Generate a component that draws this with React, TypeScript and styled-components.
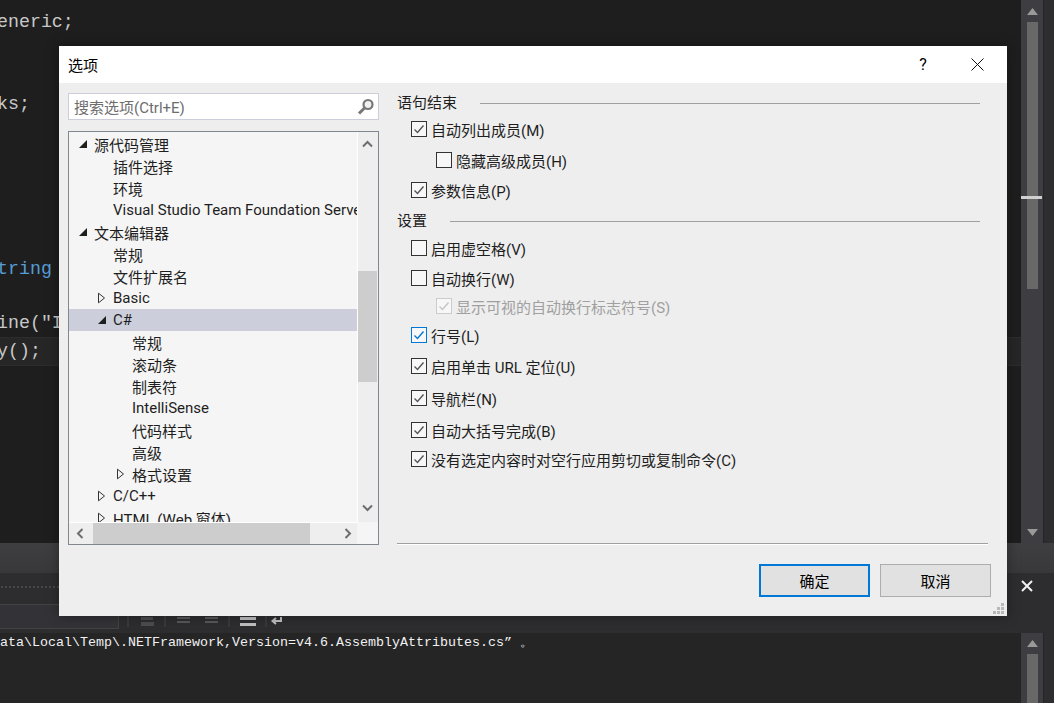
import React from 'react';
import styled, { createGlobalStyle } from 'styled-components';

const GlobalStyle = createGlobalStyle`
  html, body {
    margin: 0;
    padding: 0;
    background: #1e1e1e;
    overflow: hidden;
  }
  * {
    box-sizing: border-box;
  }
`;

const Ide = styled.div`
  position: relative;
  width: 1054px;
  height: 703px;
  display: flex;
  flex-direction: column;
  overflow: hidden;
  background: #2d2d30;
`;

const TopRow = styled.div`
  height: 543px;
  display: flex;
`;

const Editor = styled.div`
  flex: 1;
  background: #1e1e1e;
  padding-top: 9px;
  overflow: hidden;
`;

const CodeLine = styled.div<{ $current?: boolean }>`
  height: 27.4px;
  line-height: 27.4px;
  margin-left: -3px;
  font-family: "Liberation Mono", "DejaVu Sans Mono", monospace;
  font-size: 18.3px;
  color: #c8c8c8;
  white-space: pre;
  ${p => p.$current && `
    background: #262626;
    box-shadow: 0 0 0 1px #2c2c2c;
  `}
`;

const Keyword = styled.span`
  color: #569cd6;
`;

const ScrollColumn = styled.div`
  width: 22px;
  background: #3e3e42;
  position: relative;
  display: flex;
  flex-direction: column;
  align-items: center;
`;

const ScrollArrow = styled.svg<{ $top: number }>`
  width: 11px;
  height: 7px;
  margin-top: ${p => p.$top}px;
  flex: none;
`;

const DarkThumb = styled.div<{ $height: number; $top: number }>`
  width: 11px;
  height: ${p => p.$height}px;
  margin-top: ${p => p.$top}px;
  background: #686868;
  flex: none;
`;

const CaretMark = styled.div`
  position: absolute;
  left: 0;
  top: 196px;
  width: 21px;
  height: 3px;
  background: #d0d0d0;
`;

const SideStrip = styled.div`
  width: 11px;
  background: #2d2d30;
  border-left: 1px solid #252526;
`;

const Band = styled.div`
  height: 30px;
  background: linear-gradient(#3f3f42, #38383b);
`;

const PanelHeader = styled.div`
  height: 31px;
  background: #2d2d30;
  display: flex;
  align-items: flex-start;
  justify-content: flex-end;
  padding: 7px 21px 0 0;
  position: relative;
`;

const Dots = styled.div`
  position: absolute;
  left: 0;
  top: 12px;
  width: 59px;
  height: 4px;
  background-image: radial-gradient(#46464a 1px, transparent 1px);
  background-size: 4px 4px;
`;

const Toolbar = styled.div`
  height: 29px;
  background: #2d2d30;
  position: relative;
`;

const ComboBox = styled.div`
  width: 119px;
  height: 25px;
  border: 1px solid #434346;
  border-left: none;
  background: #333337;
`;

const ToolIcons = styled.svg`
  position: absolute;
  left: 120px;
  top: 0;
  width: 180px;
  height: 29px;
`;

const BottomRow = styled.div`
  height: 70px;
  display: flex;
`;

const Output = styled.div`
  flex: 1;
  background: #252526;
  padding-top: 2px;
  margin: 0;
`;

const OutputLine = styled.div`
  font-family: "Liberation Mono", monospace;
  font-size: 13.33px;
  line-height: 16px;
  color: #f1f1f1;
  white-space: pre;
`;

const Dialog = styled.div`
  position: absolute;
  left: 59px;
  top: 46px;
  width: 948px;
  height: 570px;
  display: flex;
  flex-direction: column;
  background: #eeeeee;
  box-shadow: 0 0 12px rgba(0, 0, 0, 0.35);
  font-family: Roboto, "Noto Sans CJK SC", sans-serif;
  font-size: 15px;
  color: #1e1e1e;
`;

const TitleBar = styled.div`
  height: 37px;
  flex: none;
  background: #ffffff;
  display: flex;
  align-items: center;
  padding-left: 9px;
  color: #000;
`;

const TitleText = styled.div`
  flex: 1;
`;

const HelpGlyph = styled.div`
  width: 20px;
  margin-right: 38px;
  text-align: center;
  font-size: 16px;
`;

const CloseGlyph = styled.svg`
  width: 13px;
  height: 13px;
  margin-right: 23px;
`;

const DialogBody = styled.div`
  flex: 1;
  display: flex;
  gap: 18px;
  padding: 10px 16px 19px 9px;
  min-height: 0;
`;

const LeftPane = styled.div`
  width: 311px;
  display: flex;
  flex-direction: column;
  gap: 11px;
`;

const SearchBox = styled.div`
  height: 27px;
  flex: none;
  background: #fff;
  border: 1px solid #cccedb;
  display: flex;
  align-items: center;
  justify-content: space-between;
  padding: 0 3px 0 5px;
  color: #6d6d6d;
`;

const Tree = styled.div`
  height: 414px;
  flex: none;
  border: 1px solid #82878f;
  background: #f5f5f5;
  display: grid;
  grid-template-columns: 288px 21px;
  grid-template-rows: 390px 22px;
`;

const TreeViewport = styled.div`
  overflow: hidden;
  padding-top: 1px;
`;

const TreeRow = styled.div<{ $level: number; $selected?: boolean }>`
  height: 22px;
  display: flex;
  align-items: center;
  white-space: nowrap;
  padding-left: ${p => 9 + p.$level * 19}px;
  background: ${p => (p.$selected ? '#cccedb' : 'transparent')};
`;

const ArrowSlot = styled.div`
  width: 16px;
  flex: none;
  display: flex;
  align-items: center;
`;

const VScroll = styled.div`
  background: #eeeeee;
  border-left: 1px solid #ffffff;
  display: flex;
  flex-direction: column;
  align-items: center;
  padding-right: 1px;
`;

const LightVThumb = styled.div`
  width: 19px;
  height: 111px;
  margin-top: 121px;
  background: #cdcdcd;
  flex: none;
`;

const HScroll = styled.div`
  background: #eeeeee;
  border-top: 1px solid #ffffff;
  display: flex;
  align-items: center;
  padding-left: 6px;
`;

const LightHThumb = styled.div`
  width: 217px;
  height: 21px;
  margin-left: 7px;
  background: #cdcdcd;
  flex: none;
`;

const Corner = styled.div`
  background: #f5f5f5;
`;

const ChevronIcon = styled.svg<{ $top?: number; $left?: number }>`
  width: 11px;
  height: 11px;
  flex: none;
  margin-top: ${p => p.$top ?? 0}px;
  margin-left: ${p => p.$left ?? 0}px;
`;

const RightPane = styled.div`
  flex: 1;
  display: flex;
  flex-direction: column;
`;

const Options = styled.div`
  height: 450px;
  flex: none;
`;

const GroupHeading = styled.div<{ $top?: number }>`
  height: 20px;
  line-height: 20px;
  margin-top: ${p => p.$top ?? 0}px;
  margin-right: 11px;
  display: flex;
  align-items: center;
  gap: 23px;
  &::after {
    content: '';
    flex: 1;
    height: 1px;
    background: #a0a0a0;
  }
`;

const OptionRow = styled.div<{ $top: number; $nested?: boolean; $disabled?: boolean }>`
  height: 20px;
  margin-top: ${p => p.$top}px;
  margin-left: ${p => (p.$nested ? 39 : 14)}px;
  display: flex;
  align-items: center;
  gap: 4px;
  color: ${p => (p.$disabled ? '#a0a0a0' : '#1e1e1e')};
`;

const CheckFrame = styled.div<{ $tone: 'normal' | 'focus' | 'disabled' }>`
  width: 16px;
  height: 16px;
  flex: none;
  background: #f7f7f7;
  border: 1px solid
    ${p => (p.$tone === 'focus' ? '#0078d7' : p.$tone === 'disabled' ? '#cccccc' : '#333333')};
  display: flex;
  align-items: center;
  justify-content: center;
`;

const FooterRule = styled.div`
  height: 1px;
  width: 591px;
  background: #a0a0a0;
  box-shadow: 0 1px 0 #ffffff;
  flex: none;
`;

const ButtonRow = styled.div`
  margin-top: 20px;
  display: flex;
  justify-content: flex-end;
  gap: 10px;
`;

const DialogButton = styled.button<{ $primary?: boolean }>`
  width: 111px;
  height: 33px;
  padding: 0;
  background: #e1e1e1;
  border: ${p => (p.$primary ? '2px solid #0078d7' : '1px solid #adadad')};
  font: inherit;
  color: #000;
`;

const Grip = styled.svg`
  position: absolute;
  right: 3px;
  bottom: 2px;
  width: 11px;
  height: 11px;
`;

const Filled = () => (
  <svg width="10" height="10" viewBox="0 0 10 10">
    <path d="M9 1V9H1Z" fill="#1e1e1e" />
  </svg>
);

const Hollow = () => (
  <svg width="9" height="12" viewBox="0 0 9 12">
    <path d="M1.5 1.2V10.8L7.5 6Z" fill="#f5f5f5" stroke="#333" />
  </svg>
);

type Dir = 'up' | 'down' | 'left' | 'right';

const chevronPaths: Record<Dir, string> = {
  up: 'M1 7.5L5.5 3L10 7.5',
  down: 'M1 3.5L5.5 8L10 3.5',
  left: 'M7.5 1L3 5.5L7.5 10',
  right: 'M3.5 1L8 5.5L3.5 10',
};

const Chevron = ({ dir, top, left }: { dir: Dir; top?: number; left?: number }) => (
  <ChevronIcon viewBox="0 0 11 11" $top={top} $left={left}>
    <path d={chevronPaths[dir]} fill="none" stroke="#6d6d6d" strokeWidth="2" />
  </ChevronIcon>
);

const Tick = ({ color }: { color: string }) => (
  <svg width="12" height="12" viewBox="0 0 12 12">
    <path d="M1.5 6.5L4.5 9.5L10.5 2.5" fill="none" stroke={color} strokeWidth="1.4" />
  </svg>
);

interface TreeItem {
  label: string;
  level: number;
  arrow?: 'open' | 'closed';
  selected?: boolean;
}

const treeItems: TreeItem[] = [
  { label: '源代码管理', level: 0, arrow: 'open' },
  { label: '插件选择', level: 1 },
  { label: '环境', level: 1 },
  { label: 'Visual Studio Team Foundation Server', level: 1 },
  { label: '文本编辑器', level: 0, arrow: 'open' },
  { label: '常规', level: 1 },
  { label: '文件扩展名', level: 1 },
  { label: 'Basic', level: 1, arrow: 'closed' },
  { label: 'C#', level: 1, arrow: 'open', selected: true },
  { label: '常规', level: 2 },
  { label: '滚动条', level: 2 },
  { label: '制表符', level: 2 },
  { label: 'IntelliSense', level: 2 },
  { label: '代码样式', level: 2 },
  { label: '高级', level: 2 },
  { label: '格式设置', level: 2, arrow: 'closed' },
  { label: 'C/C++', level: 1, arrow: 'closed' },
  { label: 'HTML (Web 窗体)', level: 1, arrow: 'closed' },
];

interface OptionItem {
  kind: 'option';
  label: string;
  top: number;
  checked?: boolean;
  nested?: boolean;
  tone?: 'normal' | 'focus' | 'disabled';
}

interface HeadingItem {
  kind: 'heading';
  label: string;
  top: number;
}

const optionItems: (OptionItem | HeadingItem)[] = [
  { kind: 'heading', label: '语句结束', top: 0 },
  { kind: 'option', label: '自动列出成员(M)', top: 6, checked: true },
  { kind: 'option', label: '隐藏高级成员(H)', top: 11, nested: true },
  { kind: 'option', label: '参数信息(P)', top: 10, checked: true },
  { kind: 'heading', label: '设置', top: 11 },
  { kind: 'option', label: '启用虚空格(V)', top: 7 },
  { kind: 'option', label: '自动换行(W)', top: 10 },
  { kind: 'option', label: '显示可视的自动换行标志符号(S)', top: 8, nested: true, checked: true, tone: 'disabled' },
  { kind: 'option', label: '行号(L)', top: 9, checked: true, tone: 'focus' },
  { kind: 'option', label: '启用单击 URL 定位(U)', top: 11, checked: true },
  { kind: 'option', label: '导航栏(N)', top: 12, checked: true },
  { kind: 'option', label: '自动大括号完成(B)', top: 12, checked: true },
  { kind: 'option', label: '没有选定内容时对空行应用剪切或复制命令(C)', top: 9, checked: true },
];

const tickColors = { normal: '#555555', focus: '#0078d7', disabled: '#c4c4c4' };

export default function App() {
  return (
    <Ide>
      <GlobalStyle />
      <TopRow>
        <Editor>
          <CodeLine>eneric;</CodeLine>
          <CodeLine> </CodeLine>
          <CodeLine> </CodeLine>
          <CodeLine>ks;</CodeLine>
          <CodeLine> </CodeLine>
          <CodeLine> </CodeLine>
          <CodeLine> </CodeLine>
          <CodeLine> </CodeLine>
          <CodeLine> </CodeLine>
          <CodeLine><Keyword>tring</Keyword></CodeLine>
          <CodeLine> </CodeLine>
          <CodeLine>ine("I</CodeLine>
          <CodeLine $current>y();</CodeLine>
        </Editor>
        <ScrollColumn>
          <ScrollArrow $top={8} viewBox="0 0 11 7">
            <path d="M5.5 0L11 7H0Z" fill="#999999" />
          </ScrollArrow>
          <DarkThumb $top={7} $height={267} />
          <CaretMark />
          <ScrollArrow $top={240} viewBox="0 0 11 7">
            <path d="M0 0H11L5.5 7Z" fill="#999999" />
          </ScrollArrow>
        </ScrollColumn>
        <SideStrip />
      </TopRow>
      <Band />
      <PanelHeader>
        <Dots />
        <svg width="12" height="12" viewBox="0 0 12 12">
          <path d="M1 1L11 11M11 1L1 11" stroke="#f1f1f1" strokeWidth="2" />
        </svg>
      </PanelHeader>
      <Toolbar>
        <ComboBox />
        <ToolIcons viewBox="0 0 180 29">
          <path d="M8 12V23M45 12V23M109 12V23M146 12V23" stroke="#46464a" />
          <rect x="21" y="13" width="12" height="3" fill="#4c4c4e" />
          <rect x="21" y="18" width="13" height="4" fill="#4c4c4e" />
          <rect x="57" y="13" width="13" height="2" fill="#58585a" />
          <rect x="57" y="17" width="13" height="2" fill="#58585a" />
          <rect x="85" y="13" width="13" height="2" fill="#58585a" />
          <rect x="85" y="17" width="13" height="2" fill="#58585a" />
          <rect x="120" y="13" width="16" height="3" fill="#c0c0c0" />
          <rect x="120" y="19" width="16" height="3" fill="#c0c0c0" />
          <path d="M161 13V17H153M156 14L152.500 17L156 20" fill="none" stroke="#c0c0c0" strokeWidth="2" />
        </ToolIcons>
      </Toolbar>
      <BottomRow>
        <Output>
          <OutputLine>ata\Local\Temp\.NETFramework,Version=v4.6.AssemblyAttributes.cs” 。</OutputLine>
        </Output>
        <ScrollColumn>
          <ScrollArrow $top={7} viewBox="0 0 11 7">
            <path d="M5.5 0L11 7H0Z" fill="#999999" />
          </ScrollArrow>
          <DarkThumb $top={7} $height={60} />
        </ScrollColumn>
        <SideStrip />
      </BottomRow>

      <Dialog>
        <TitleBar>
          <TitleText>选项</TitleText>
          <HelpGlyph>?</HelpGlyph>
          <CloseGlyph viewBox="0 0 13 13">
            <path d="M0.5 0.5L12.500 12.500M12.500 0.5L0.5 12.500" stroke="#111" strokeWidth="1" />
          </CloseGlyph>
        </TitleBar>
        <DialogBody>
          <LeftPane>
            <SearchBox>
              <span>搜索选项(Ctrl+E)</span>
              <svg width="18" height="18" viewBox="0 0 18 18">
                <circle cx="11" cy="6.500" r="4.500" fill="#f0f0f0" stroke="#777" strokeWidth="2.200" />
                <path d="M7.500 10L2 15.500" stroke="#777" strokeWidth="3" />
              </svg>
            </SearchBox>
            <Tree>
              <TreeViewport>
                {treeItems.map((item, i) => (
                  <TreeRow key={i} $level={item.level} $selected={item.selected}>
                    <ArrowSlot>
                      {item.arrow === 'open' && <Filled />}
                      {item.arrow === 'closed' && <Hollow />}
                    </ArrowSlot>
                    {item.label}
                  </TreeRow>
                ))}
              </TreeViewport>
              <VScroll>
                <Chevron dir="up" top={7} />
                <LightVThumb />
                <Chevron dir="down" top={120} />
              </VScroll>
              <HScroll>
                <Chevron dir="left" />
                <LightHThumb />
                <Chevron dir="right" left={32} />
              </HScroll>
              <Corner />
            </Tree>
          </LeftPane>
          <RightPane>
            <Options>
              {optionItems.map((item, i) =>
                item.kind === 'heading' ? (
                  <GroupHeading key={i} $top={item.top}>{item.label}</GroupHeading>
                ) : (
                  <OptionRow
                    key={i}
                    $top={item.top}
                    $nested={item.nested}
                    $disabled={item.tone === 'disabled'}
                  >
                    <CheckFrame $tone={item.tone ?? 'normal'}>
                      {item.checked && <Tick color={tickColors[item.tone ?? 'normal']} />}
                    </CheckFrame>
                    {item.label}
                  </OptionRow>
                )
              )}
            </Options>
            <FooterRule />
            <ButtonRow>
              <DialogButton $primary>确定</DialogButton>
              <DialogButton>取消</DialogButton>
            </ButtonRow>
          </RightPane>
        </DialogBody>
        <Grip viewBox="0 0 11 11">
          <path d="M8 0h3v3H8zM4 4h3v3H4zM8 4h3v3H8zM0 8h3v3H0zM4 8h3v3H4zM8 8h3v3H8z" fill="#b8b8b8" />
        </Grip>
      </Dialog>
    </Ide>
  );
}
